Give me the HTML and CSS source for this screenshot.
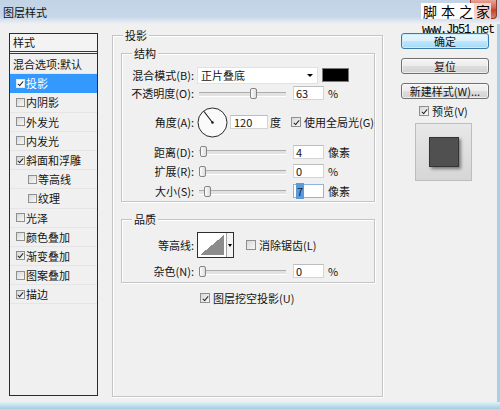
FILE: index.html
```html
<!DOCTYPE html>
<html lang="zh-CN">
<head>
<meta charset="utf-8">
<title>图层样式</title>
<link rel="stylesheet" href="styles.css">
</head>
<body>
<div class="window">
  <div class="titlebar">
    <span class="title">图层样式</span>
    <span class="close"></span>
  </div>

  <div class="watermark">
    <div class="wm-cn">
      <span class="wm-white"><span class="wm-c">脚</span><span class="wm-c">本</span><span class="wm-c">之</span></span><span class="wm-jia">家</span>
    </div>
    <div class="wm-url">www.Jb51.net</div>
  </div>

  <div class="client">
    <div class="styles-panel">
      <div class="panel-head">样式</div>
      <ul class="style-list">
        <li class="item plain">混合选项:默认</li>
        <li class="item selected"><span class="cb on"></span><span>投影</span></li>
        <li class="item"><span class="cb"></span><span>内阴影</span></li>
        <li class="item"><span class="cb"></span><span>外发光</span></li>
        <li class="item"><span class="cb"></span><span>内发光</span></li>
        <li class="item"><span class="cb on"></span><span>斜面和浮雕</span></li>
        <li class="item sub"><span class="cb"></span><span>等高线</span></li>
        <li class="item sub"><span class="cb"></span><span>纹理</span></li>
        <li class="item"><span class="cb"></span><span>光泽</span></li>
        <li class="item"><span class="cb"></span><span>颜色叠加</span></li>
        <li class="item"><span class="cb on"></span><span>渐变叠加</span></li>
        <li class="item"><span class="cb"></span><span>图案叠加</span></li>
        <li class="item"><span class="cb on"></span><span>描边</span></li>
      </ul>
    </div>

    <fieldset class="group outer">
      <legend>投影</legend>

      <fieldset class="group inner structure">
        <legend>结构</legend>
        <div class="row h18">
          <span class="lbl">混合模式(B):</span>
          <div class="select"><span class="select-text">正片叠底</span><span class="caret"></span></div>
          <span class="swatch"></span>
        </div>
        <div class="row h18">
          <span class="lbl">不透明度(O):</span>
          <div class="slider"><span class="thumb" style="left:51px"></span></div>
          <span class="field">63</span>
          <span class="unit">%</span>
        </div>
        <div class="row h40">
          <span class="lbl">角度(A):</span>
          <svg class="dial" width="31" height="31" viewBox="0 0 31 31">
            <circle cx="15.5" cy="15.5" r="14.5" fill="#fafafa" stroke="#2a2a2a" stroke-width="1"/>
            <line x1="15.5" y1="15.5" x2="7" y2="4.5" stroke="#222" stroke-width="1.2"/>
            <circle cx="15.5" cy="15.5" r="1.3" fill="#222"/>
          </svg>
          <span class="field wide">120</span>
          <span class="unit deg">度</span>
          <span class="cb big on global"></span><span class="cb-text">使用全局光(G)</span>
        </div>
        <div class="row h19">
          <span class="lbl">距离(D):</span>
          <div class="slider"><span class="thumb" style="left:1px"></span></div>
          <span class="field">4</span>
          <span class="unit">像素</span>
        </div>
        <div class="row h20">
          <span class="lbl">扩展(R):</span>
          <div class="slider"><span class="thumb" style="left:0px"></span></div>
          <span class="field">0</span>
          <span class="unit">%</span>
        </div>
        <div class="row h20">
          <span class="lbl">大小(S):</span>
          <div class="slider"><span class="thumb" style="left:5px"></span></div>
          <span class="field focused"><span class="sel">7</span></span>
          <span class="unit">像素</span>
        </div>
      </fieldset>

      <fieldset class="group inner quality">
        <legend>品质</legend>
        <div class="row h32">
          <span class="lbl">等高线:</span>
          <div class="contour">
            <span class="contour-img"><span class="curve"></span></span>
            <span class="contour-btn"><span class="caret"></span></span>
          </div>
          <span class="cb big anti"></span><span class="cb-text">消除锯齿(L)</span>
        </div>
        <div class="row h20">
          <span class="lbl">杂色(N):</span>
          <div class="slider"><span class="thumb" style="left:0px"></span></div>
          <span class="field">0</span>
          <span class="unit">%</span>
        </div>
      </fieldset>

      <div class="knockout">
        <span class="cb big on"></span><span class="cb-text">图层挖空投影(U)</span>
      </div>
    </fieldset>

    <div class="side">
      <div class="btn default">确定</div>
      <div class="btn">复位</div>
      <div class="btn last">新建样式(W)...</div>
      <div class="preview-row"><span class="cb big on"></span><span class="cb-text">预览(V)</span></div>
      <div class="preview"><span class="preview-square"></span></div>
    </div>
  </div>

  <div class="frame-bottom"></div>
</div>
</body>
</html>
```

FILE: styles.css
```css
* { box-sizing: border-box; }
html, body { margin: 0; padding: 0; }
body {
  width: 500px;
  height: 409px;
  overflow: hidden;
  font-family: "Noto Sans CJK SC", "Noto Sans", sans-serif;
  font-size: 11px;
  color: #141414;
  background: #f0f0f0;
}

.window {
  position: relative;
  width: 500px;
  height: 409px;
  display: flex;
  flex-direction: column;
}

/* title bar */
.titlebar {
  height: 24px;
  flex: none;
  display: flex;
  align-items: flex-start;
  background: linear-gradient(#c2d3e6 0%, #c7d7e9 70%, #dfe7f0 88%, #f0f0f0 100%);
}
.title {
  padding: 4px 0 0 3px;
  line-height: 16px;
  color: #111;
}
.close {
  margin-left: auto;
  margin-right: 3px;
  width: 27px;
  height: 19px;
  border: 1px solid #8c3b2d;
  border-top: 0;
  border-radius: 0 0 4px 4px;
  background: linear-gradient(#e7a596, #d0634d 45%, #c0432c 55%, #d9826a);
}

/* watermark overlay */
.watermark {
  position: absolute;
  left: 421px;
  top: 3px;
}
.wm-cn {
  display: flex;
  font-size: 14px;
  line-height: 16px;
  color: #000;
}
.wm-white {
  display: flex;
  gap: 4px;
  padding: 0 1px 0 2px;
  background: #fff;
}
.wm-c { width: 14px; }
.wm-jia {
  padding: 0 1px 0 2px;
  background: rgba(255, 228, 224, 0.85);
}
.wm-url {
  margin-top: 6px;
  margin-left: 1px;
  font-family: "Liberation Mono", monospace;
  font-size: 12px;
  line-height: 11px;
  letter-spacing: -1.2px;
  color: #000;
}

/* client area */
.client {
  flex: 1;
  display: flex;
  align-items: flex-start;
  border-right: 3px solid #a7d2e4;
}
.frame-bottom {
  height: 7px;
  flex: none;
  background: linear-gradient(#e3f1f7, #9fcfe2);
}

/* left styles list */
.styles-panel {
  width: 89px;
  height: 363px;
  margin: 9px 0 0 9px;
  border: 1px solid #2b2b2b;
  background: #f0f0f0;
  flex: none;
}
.panel-head {
  height: 20px;
  padding-left: 3px;
  line-height: 17px;
  border-bottom: 3px double #3a3a3a;
  background: #f3f3f3;
}
.style-list {
  list-style: none;
  margin: 0;
  padding: 1px 0 0;
}
.item {
  height: 19.2px;
  display: flex;
  align-items: center;
  gap: 1px;
  padding-left: 6px;
  white-space: nowrap;
  line-height: 14px;
  border-bottom: 1px solid #e5e5e5;
}
.item.plain { padding-left: 3px; }
.item.sub { padding-left: 18px; }
.item.selected {
  background: #3399ff;
  color: #fff;
  border-bottom-color: #3399ff;
}
.item.selected .cb { background: #fff; border-color: #d8e8f8; }

/* checkboxes */
.cb {
  position: relative;
  display: inline-block;
  flex: none;
  width: 9px;
  height: 9px;
  border: 1px solid #8e8f8f;
  background: linear-gradient(135deg, #d8d8d8, #f8f8f8);
}
.cb.big { width: 10px; height: 10px; }
.cb.on::after {
  content: "";
  position: absolute;
  left: 2px;
  top: 0px;
  width: 2px;
  height: 5px;
  border: solid #262626;
  border-width: 0 1.5px 1.5px 0;
  transform: rotate(40deg);
}
.cb.big.on::after { left: 2.5px; top: 0.5px; }
.cb-text { margin-left: 3px; white-space: nowrap; }

/* group boxes */
.group {
  margin: 0;
  min-width: 0;
  border: 1px solid #c4c4c4;
  box-shadow: inset 1px 1px 0 #fff, 1px 1px 0 #fff;
}
.group > legend {
  padding: 0 2px;
  line-height: 14px;
  background: #f0f0f0;
}
.outer {
  flex: none;
  width: 271px;
  height: 369px;
  margin: 4px 0 0 14px;
  padding: 4px 7px 0 8px;
}
.outer > legend { margin-left: 2px; }
.inner {
  width: 254px;
  padding: 0;
}
.inner > legend { margin-left: 10px; }
.structure { padding-top: 6px; }
.quality { margin-top: 10px; padding-top: 3px; padding-bottom: 1px; }

/* rows */
.row {
  display: flex;
  align-items: center;
  white-space: nowrap;
  line-height: 14px;
}
.h18 { height: 18px; }
.h19 { height: 19px; }
.h20 { height: 20px; }
.h32 { height: 32px; }
.h40 { height: 40px; }
.lbl {
  flex: none;
  width: 72px;
  text-align: right;
}

.select {
  display: flex;
  align-items: center;
  width: 121px;
  height: 17px;
  margin-left: 3px;
  background: #fff;
  border: 1px solid #e2e2e2;
}
.select-text { padding-left: 3px; flex: 1; }
.caret {
  width: 0;
  height: 0;
  border-left: 3px solid transparent;
  border-right: 3px solid transparent;
  border-top: 3px solid #000;
}
.select .caret { margin-right: 4px; }
.swatch {
  width: 27px;
  height: 14px;
  margin-left: 4px;
  background: #000;
  border: 1px solid #7a7a7a;
}

.slider {
  position: relative;
  flex: none;
  width: 87px;
  height: 11px;
  margin-left: 5px;
}
.slider::before {
  content: "";
  position: absolute;
  left: 0;
  right: 0;
  top: 4px;
  height: 3px;
  border-top: 1px solid #adadad;
  border-bottom: 1px solid #fff;
  background: #e2e2e2;
}
.thumb {
  position: absolute;
  top: 0;
  width: 7px;
  height: 11px;
  border: 1px solid #858585;
  border-radius: 2px;
  background: linear-gradient(90deg, #fdfdfd, #dcdcdc);
}

.field {
  flex: none;
  width: 31px;
  height: 14px;
  margin-left: 7px;
  padding-left: 2px;
  line-height: 12px;
  background: #fff;
  border: 1px solid #d4d4d4;
  border-top-color: #bdbdbd;
}
.field.wide { width: 38px; margin-left: 2px; padding-left: 3px; }
.field.focused { border-color: #8cb4dc; }
.sel {
  background: #5d9bd6;
  color: #0f2440;
  padding: 0 1px;
}
.unit { margin-left: 4px; }
.unit.deg { margin-left: 2px; }
.cb.global { margin-left: 10px; }

.dial { flex: none; margin-left: 3px; display: block; }

.contour {
  display: flex;
  flex: none;
  height: 26px;
  margin-left: 3px;
  border: 1px solid #2e2e2e;
  background: #fff;
}
.contour-img {
  width: 28px;
  padding: 2px;
  display: flex;
}
.curve {
  flex: 1;
  background: linear-gradient(to top left, #8c8c8c 50%, #fff 50%);
}
.contour-btn {
  width: 7px;
  display: flex;
  align-items: center;
  justify-content: center;
  border-left: 1px solid #a0a0a0;
  background: #f4f4f4;
}
.contour-btn .caret {
  border-left-width: 2px;
  border-right-width: 2px;
}
.cb.anti { margin-left: 12px; }

.knockout {
  display: flex;
  align-items: center;
  height: 16px;
  margin-top: 7px;
  padding-left: 79px;
  line-height: 14px;
}

/* right column */
.side {
  flex: none;
  width: 88px;
  margin: 9px 0 0 18px;
  display: flex;
  flex-direction: column;
}
.btn {
  height: 16px;
  margin-bottom: 9px;
  line-height: 14px;
  text-align: center;
  border: 1px solid #707070;
  border-radius: 3px;
  background: linear-gradient(#f4f4f4 0%, #ececec 50%, #dedede 51%, #d2d2d2 100%);
  box-shadow: inset 0 0 0 1px rgba(255, 255, 255, 0.6);
}
.btn.default {
  border-color: #3a7ca8;
  background: linear-gradient(#eaf6fd 0%, #d9f0fc 50%, #bee6fd 51%, #a7d9f5 100%);
  box-shadow: inset 0 0 0 1px #c8ecfc;
}
.btn.last { margin-bottom: 0; }
.preview-row {
  display: flex;
  align-items: center;
  height: 14px;
  margin-top: 5px;
  padding-left: 18px;
  line-height: 14px;
}
.preview {
  width: 57px;
  height: 58px;
  margin: 5px 0 0 14px;
  display: flex;
  align-items: center;
  justify-content: center;
  border: 1px solid #bdbdbd;
  background: linear-gradient(#e8e8e8, #d6d6d6);
}
.preview-square {
  width: 30px;
  height: 30px;
  background: #505050;
  border: 1px solid #333;
  box-shadow: 2px 2px 3px rgba(0, 0, 0, 0.45);
}
```
